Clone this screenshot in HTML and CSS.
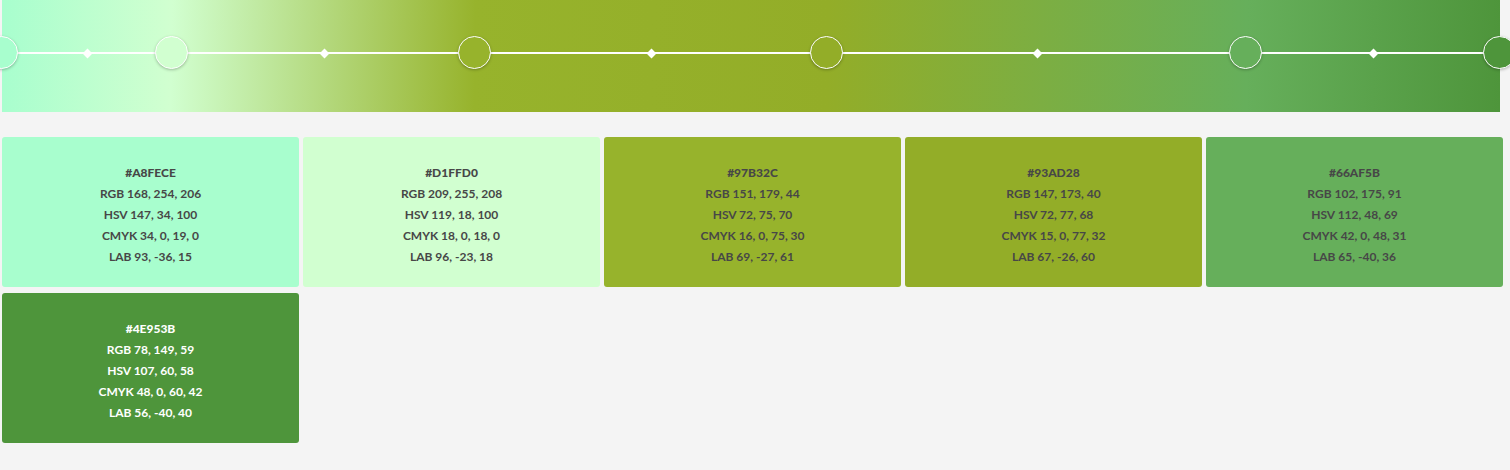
FILE: index.html
```html
<!DOCTYPE html>
<html>
<head>
<meta charset="utf-8">
<link rel="stylesheet" href="styles.css">
</head>
<body>
<div class="band">
  <div class="line"></div>
  <div class="stop" style="left:0%;background:#A8FECE"></div>
  <div class="dia" style="left:5.7%"></div>
  <div class="stop" style="left:11.35%;background:#D1FFD0"></div>
  <div class="dia" style="left:21.5%"></div>
  <div class="stop" style="left:31.6%;background:#97B32C"></div>
  <div class="dia" style="left:43.35%"></div>
  <div class="stop" style="left:55.1%;background:#93AD28"></div>
  <div class="dia" style="left:69.1%"></div>
  <div class="stop" style="left:83.05%;background:#66AF5B"></div>
  <div class="dia" style="left:91.55%"></div>
  <div class="stop" style="left:100%;background:#4E953B"></div>
</div>
<div class="grid">
  <div class="card" style="background:#A8FECE"><b>#A8FECE</b><span>RGB 168, 254, 206</span><span>HSV 147, 34, 100</span><span>CMYK 34, 0, 19, 0</span><span>LAB 93, -36, 15</span></div>
  <div class="card" style="background:#D1FFD0"><b>#D1FFD0</b><span>RGB 209, 255, 208</span><span>HSV 119, 18, 100</span><span>CMYK 18, 0, 18, 0</span><span>LAB 96, -23, 18</span></div>
  <div class="card" style="background:#97B32C"><b>#97B32C</b><span>RGB 151, 179, 44</span><span>HSV 72, 75, 70</span><span>CMYK 16, 0, 75, 30</span><span>LAB 69, -27, 61</span></div>
  <div class="card" style="background:#93AD28"><b>#93AD28</b><span>RGB 147, 173, 40</span><span>HSV 72, 77, 68</span><span>CMYK 15, 0, 77, 32</span><span>LAB 67, -26, 60</span></div>
  <div class="card" style="background:#66AF5B"><b>#66AF5B</b><span>RGB 102, 175, 91</span><span>HSV 112, 48, 69</span><span>CMYK 42, 0, 48, 31</span><span>LAB 65, -40, 36</span></div>
  <div class="card light" style="background:#4E953B"><b>#4E953B</b><span>RGB 78, 149, 59</span><span>HSV 107, 60, 58</span><span>CMYK 48, 0, 60, 42</span><span>LAB 56, -40, 40</span></div>
</div>
</body>
</html>
```
FILE: styles.css
```css
html, body {
  margin: 0;
  padding: 0;
  background: #f4f4f4;
  overflow: hidden;
}
body {
  font-family: Lato, "Open Sans", sans-serif;
}
.band {
  position: relative;
  margin-left: 2px;
  width: 1498px;
  height: 112px;
  background: linear-gradient(91deg, #A8FECE 0%, #D1FFD0 11.35%, #97B32C 31.6%, #93AD28 55.1%, #66AF5B 83.05%, #4E953B 100%);
}
.line {
  position: absolute;
  left: 0;
  right: -12px;
  top: 52px;
  height: 2px;
  background: #fff;
}
.stop {
  position: absolute;
  top: 36px;
  width: 31px;
  height: 31px;
  margin-left: -17px;
  border: 1.5px solid #fff;
  border-radius: 50%;
  box-shadow: 0 1px 3px rgba(0,0,0,0.25);
}
.dia {
  position: absolute;
  top: 49.5px;
  width: 7px;
  height: 7px;
  margin-left: -3.5px;
  background: #fff;
  transform: rotate(45deg);
}
.grid {
  display: grid;
  grid-template-columns: repeat(5, 297px);
  column-gap: 4px;
  row-gap: 6px;
  margin: 25px 0 0 2px;
}
.card {
  height: 150px;
  border-radius: 3px;
  display: flex;
  flex-direction: column;
  align-items: center;
  justify-content: center;
  padding-top: 4px;
  box-sizing: border-box;
  color: #474747;
  font-size: 12px;
  font-weight: 700;
  line-height: 21px;
}
.card b, .card span {
  display: block;
}
.card.light {
  color: #fff;
}
```
